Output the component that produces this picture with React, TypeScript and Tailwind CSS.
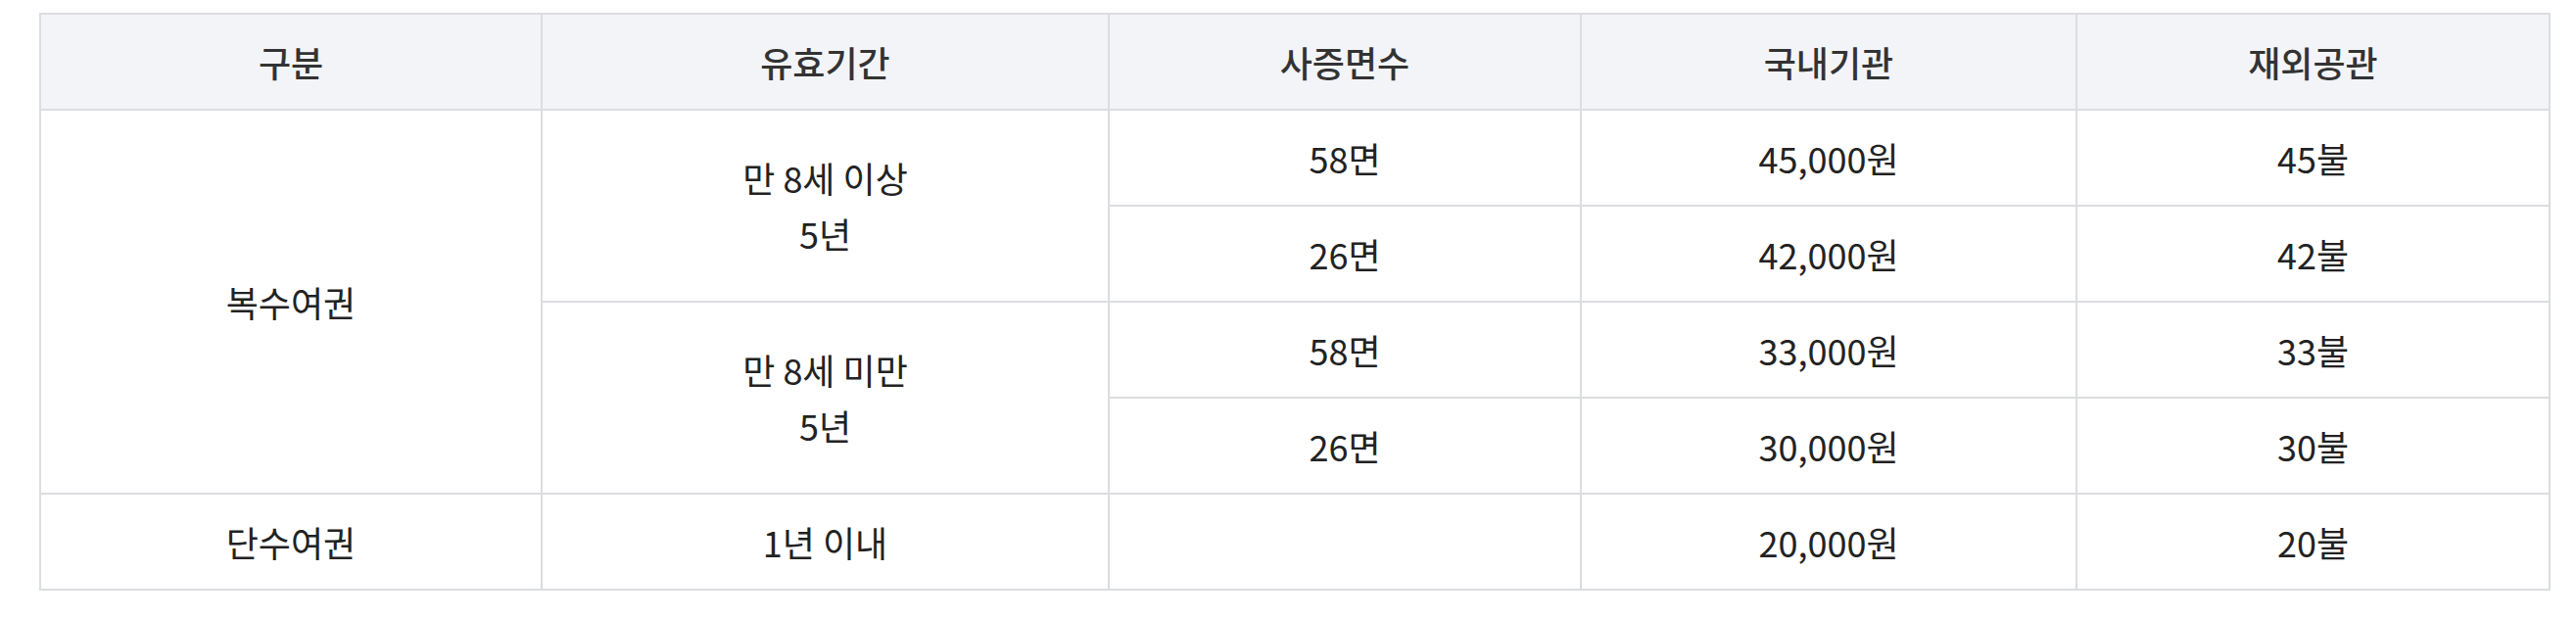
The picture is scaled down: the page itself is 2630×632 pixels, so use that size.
import React from "react";

const cell = "border-2 border-[#dcdde1] text-center align-middle h-[98px] p-0";

const rows = [
  { pages: "58면", local: "45,000원", abroad: "45불" },
  { pages: "26면", local: "42,000원", abroad: "42불" },
  { pages: "58면", local: "33,000원", abroad: "33불" },
  { pages: "26면", local: "30,000원", abroad: "30불" },
];

const App = () => {
  return (
    <div className="w-[2630px] h-[632px] bg-white pt-[13px] pl-[40px] font-['Noto_Sans_CJK_KR','Noto_Sans',sans-serif]">
      <table className="table-fixed border-collapse w-[2562px] text-[36px] leading-[57px] text-[#222]">
        <colgroup>
          <col className="w-[512px]" />
          <col className="w-[579px]" />
          <col className="w-[482px]" />
          <col className="w-[506px]" />
          <col className="w-[483px]" />
        </colgroup>
        <thead>
          <tr className="bg-[#f3f4f8] text-[#333]">
            <th className={cell + " font-medium"}>구분</th>
            <th className={cell + " font-medium"}>유효기간</th>
            <th className={cell + " font-medium"}>사증면수</th>
            <th className={cell + " font-medium"}>국내기관</th>
            <th className={cell + " font-medium"}>재외공관</th>
          </tr>
        </thead>
        <tbody>
          {rows.map((r, i) => (
            <tr key={i}>
              {i === 0 && (
                <td rowSpan={4} className={cell}>
                  복수여권
                </td>
              )}
              {i === 0 && (
                <td rowSpan={2} className={cell}>
                  만 8세 이상
                  <br />
                  5년
                </td>
              )}
              {i === 2 && (
                <td rowSpan={2} className={cell}>
                  만 8세 미만
                  <br />
                  5년
                </td>
              )}
              <td className={cell}>{r.pages}</td>
              <td className={cell}>{r.local}</td>
              <td className={cell}>{r.abroad}</td>
            </tr>
          ))}
          <tr>
            <td className={cell}>단수여권</td>
            <td className={cell}>1년 이내</td>
            <td className={cell}></td>
            <td className={cell}>20,000원</td>
            <td className={cell}>20불</td>
          </tr>
        </tbody>
      </table>
    </div>
  );
};

export default App;
